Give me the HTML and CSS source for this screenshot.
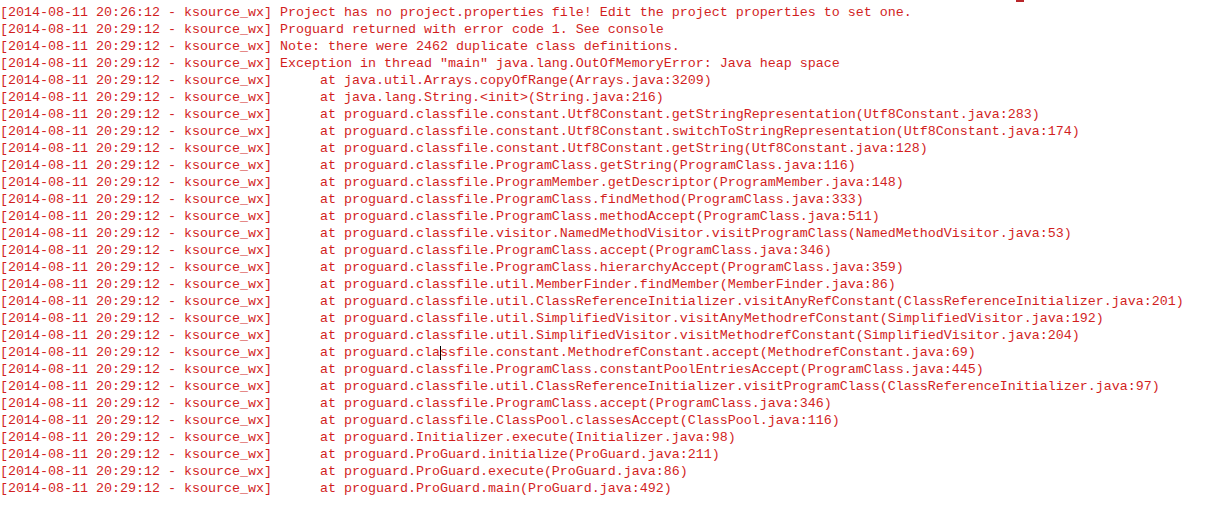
FILE: index.html
```html
<!DOCTYPE html>
<html>
<head>
<meta charset="utf-8">
<link rel="stylesheet" href="styles.css">
</head>
<body>
<div class="console">
<div class="line">[2014-08-11 20:26:12 - ksource_wx] Project has no project.properties file! Edit the project properties to set one.</div>
<div class="line">[2014-08-11 20:29:12 - ksource_wx] Proguard returned with error code 1. See console</div>
<div class="line">[2014-08-11 20:29:12 - ksource_wx] Note: there were 2462 duplicate class definitions.</div>
<div class="line">[2014-08-11 20:29:12 - ksource_wx] Exception in thread "main" java.lang.OutOfMemoryError: Java heap space</div>
<div class="line">[2014-08-11 20:29:12 - ksource_wx]      at java.util.Arrays.copyOfRange(Arrays.java:3209)</div>
<div class="line">[2014-08-11 20:29:12 - ksource_wx]      at java.lang.String.&lt;init&gt;(String.java:216)</div>
<div class="line">[2014-08-11 20:29:12 - ksource_wx]      at proguard.classfile.constant.Utf8Constant.getStringRepresentation(Utf8Constant.java:283)</div>
<div class="line">[2014-08-11 20:29:12 - ksource_wx]      at proguard.classfile.constant.Utf8Constant.switchToStringRepresentation(Utf8Constant.java:174)</div>
<div class="line">[2014-08-11 20:29:12 - ksource_wx]      at proguard.classfile.constant.Utf8Constant.getString(Utf8Constant.java:128)</div>
<div class="line">[2014-08-11 20:29:12 - ksource_wx]      at proguard.classfile.ProgramClass.getString(ProgramClass.java:116)</div>
<div class="line">[2014-08-11 20:29:12 - ksource_wx]      at proguard.classfile.ProgramMember.getDescriptor(ProgramMember.java:148)</div>
<div class="line">[2014-08-11 20:29:12 - ksource_wx]      at proguard.classfile.ProgramClass.findMethod(ProgramClass.java:333)</div>
<div class="line">[2014-08-11 20:29:12 - ksource_wx]      at proguard.classfile.ProgramClass.methodAccept(ProgramClass.java:511)</div>
<div class="line">[2014-08-11 20:29:12 - ksource_wx]      at proguard.classfile.visitor.NamedMethodVisitor.visitProgramClass(NamedMethodVisitor.java:53)</div>
<div class="line">[2014-08-11 20:29:12 - ksource_wx]      at proguard.classfile.ProgramClass.accept(ProgramClass.java:346)</div>
<div class="line">[2014-08-11 20:29:12 - ksource_wx]      at proguard.classfile.ProgramClass.hierarchyAccept(ProgramClass.java:359)</div>
<div class="line">[2014-08-11 20:29:12 - ksource_wx]      at proguard.classfile.util.MemberFinder.findMember(MemberFinder.java:86)</div>
<div class="line">[2014-08-11 20:29:12 - ksource_wx]      at proguard.classfile.util.ClassReferenceInitializer.visitAnyRefConstant(ClassReferenceInitializer.java:201)</div>
<div class="line">[2014-08-11 20:29:12 - ksource_wx]      at proguard.classfile.util.SimplifiedVisitor.visitAnyMethodrefConstant(SimplifiedVisitor.java:192)</div>
<div class="line">[2014-08-11 20:29:12 - ksource_wx]      at proguard.classfile.util.SimplifiedVisitor.visitMethodrefConstant(SimplifiedVisitor.java:204)</div>
<div class="line">[2014-08-11 20:29:12 - ksource_wx]      at proguard.classfile.constant.MethodrefConstant.accept(MethodrefConstant.java:69)</div>
<div class="line">[2014-08-11 20:29:12 - ksource_wx]      at proguard.classfile.ProgramClass.constantPoolEntriesAccept(ProgramClass.java:445)</div>
<div class="line">[2014-08-11 20:29:12 - ksource_wx]      at proguard.classfile.util.ClassReferenceInitializer.visitProgramClass(ClassReferenceInitializer.java:97)</div>
<div class="line">[2014-08-11 20:29:12 - ksource_wx]      at proguard.classfile.ProgramClass.accept(ProgramClass.java:346)</div>
<div class="line">[2014-08-11 20:29:12 - ksource_wx]      at proguard.classfile.ClassPool.classesAccept(ClassPool.java:116)</div>
<div class="line">[2014-08-11 20:29:12 - ksource_wx]      at proguard.Initializer.execute(Initializer.java:98)</div>
<div class="line">[2014-08-11 20:29:12 - ksource_wx]      at proguard.ProGuard.initialize(ProGuard.java:211)</div>
<div class="line">[2014-08-11 20:29:12 - ksource_wx]      at proguard.ProGuard.execute(ProGuard.java:86)</div>
<div class="line">[2014-08-11 20:29:12 - ksource_wx]      at proguard.ProGuard.main(ProGuard.java:492)</div>
<span class="caret"></span>
<span class="mark"></span>
</div>
</body>
</html>
```

FILE: styles.css
```css
html, body {
  margin: 0;
  padding: 0;
  background: #ffffff;
}

.console {
  position: relative;
  width: 1225px;
  height: 509px;
  padding-top: 4px;
  box-sizing: border-box;
  font-family: "Courier New", "Nimbus Mono PS", "Nimbus Mono L", "FreeMono", "Liberation Mono", monospace;
  font-size: 13.333px;
  line-height: 17px;
  color: #d21e1e;
}

.line {
  white-space: pre;
  height: 17px;
}

.caret {
  position: absolute;
  left: 440px;
  top: 346px;
  width: 1px;
  height: 14px;
  background: #000000;
}

.mark {
  position: absolute;
  left: 1016px;
  top: 0;
  width: 8px;
  height: 2px;
  background: #b8262a;
}
```
